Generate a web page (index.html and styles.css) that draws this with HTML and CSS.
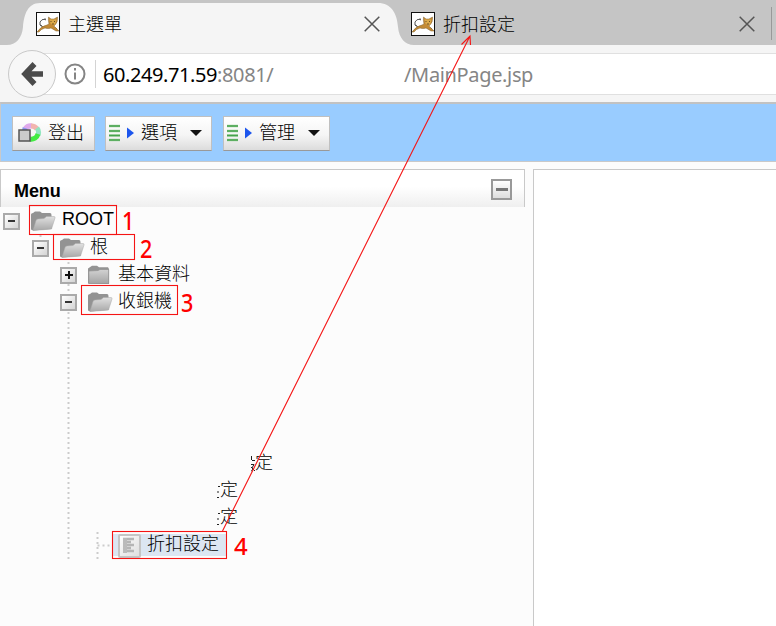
FILE: index.html
```html
<!DOCTYPE html>
<html lang="zh-Hant">
<head>
<meta charset="utf-8">
<title>主選單</title>
<link rel="stylesheet" href="styles.css">
</head>
<body>
<svg class="defs" width="0" height="0" aria-hidden="true">
  <defs>
    <linearGradient id="fold" x1="0" y1="0" x2="0" y2="1"><stop offset="0" stop-color="#d2d2d2"/><stop offset="1" stop-color="#a4a4a4"/></linearGradient>
    <linearGradient id="flap" x1="0" y1="0" x2="0" y2="1"><stop offset="0" stop-color="#e0e0e0"/><stop offset="1" stop-color="#a8a8a8"/></linearGradient>
    <linearGradient id="page-rim" x1="0" y1="0" x2="1" y2="1"><stop stop-color="#fff"/><stop offset="1" stop-color="#ddd"/></linearGradient>
    <symbol id="cat" viewBox="0 0 24 24">
      <rect x=".5" y=".5" width="23" height="23" fill="#fff" stroke="#111"/>
      <path d="M10 7Q5 7 4 10Q3 14 6 14M8 7l2 1M4 13l3 2M19 16l2 1" fill="none" stroke="#555" stroke-width="1"/>
      <path d="M1 20Q5 14 11 13L13 12Q12 8 12.500 5L15 7H18L21.500 5Q22 10 19 13Q17 14 19 15L23 19H20L15 16Q12 17 9 16Q5 17 3 20Z" fill="#c38a35" stroke="#806331" stroke-width=".5"/>
      <path d="M13.500 7.500h7l-1 4-2 2-3-2z" fill="#dba94a"/><path d="M14.500 9.500h1M18 9.500h1M16 12h2" stroke="#6d5023"/>
    </symbol>
    <symbol id="open" viewBox="0 0 25 20">
      <path d="M0 18.500V3.500Q0 2 2 2L4 .5H9L11 2H19Q20.500 2 20.500 4V18L2 19.500Z" fill="#939393"/>
      <path d="M2 19.500L5 9.500Q5.500 8 7 8L13 7.500L15.500 5.500H23Q24.500 5.500 24 7L20.500 18Z" fill="url(#flap)" stroke="#aaa" stroke-width=".5"/>
    </symbol>
    <symbol id="closed" viewBox="0 0 25 20">
      <path d="M0 18.500V3.500L4 .8H9L11 2.200H20L21 4V19Z" fill="#949494"/>
      <path d="M.8 18.500V6L10 5.500L12 4.500H20.700V18.500Z" fill="url(#fold)" stroke="#919191" stroke-width=".7"/>
    </symbol>
    <symbol id="menu" viewBox="0 0 26 18">
      <path d="M0 2h11M0 7h11M0 11.500h11M0 16h11" stroke="#a5d5a5" stroke-width="2.400"/>
      <path d="M0 2h11M0 7h11M0 11.500h11M0 16h11" stroke="#46a24c" stroke-width="1.300"/>
      <path d="M18 3.500L25 9L18 14.500Z" fill="#1d56ed"/>
    </symbol>
  </defs>
</svg>

<div class="window">
  <header class="tabs">
    <svg class="tab-shape" width="420" height="45" viewBox="0 0 420 45"><path d="M0 45H7C16 45 22 38 23 27C24 14 28 3 40 3H378C391 3 397 13 398 27C399 38 405 45 414 45Z" fill="#f5f5f5"/></svg>
    <div class="tab first"><svg class="cat"><use href="#cat"/></svg><span>主選單</span><svg class="close" viewBox="0 0 16 16"><path d="M.7.7L15.300 15.300M15.300.7L.7 15.300"/></svg></div>
    <div class="tab second"><svg class="cat"><use href="#cat"/></svg><span>折扣設定</span><svg class="close" viewBox="0 0 16 16"><path d="M.7.7L15.300 15.300M15.300.7L.7 15.300"/></svg></div>
    <i class="divider"></i>
  </header>

  <nav class="address">
    <div class="field">
      <svg class="info" viewBox="0 0 22 22"><circle cx="11" cy="11" r="9.500"/><path d="M11 9.500V16.500M11 5V7.500"/></svg>
      <i class="sep"></i>
      <span class="host">60.249.71.59</span><span class="port">:8081/</span><span class="path">/MainPage.jsp</span>
    </div>
    <div class="back"><svg width="22" height="24" viewBox="0 0 22 24"><path d="M13.500 2L4 12L13.500 22M4 12H22" fill="none" stroke="#4b4b4b" stroke-width="5.500"/></svg></div>
  </nav>

  <div class="toolbar">
    <button class="logout"><svg width="24" height="20" viewBox="0 0 24 20"><g fill="none" stroke-width="5"><path d="M7 6A7 7 0 0 1 14 3" stroke="#dfa9ec"/><path d="M13 3A7 7 0 0 1 19 6" stroke="#f2b4ae"/><path d="M19 5A7 7 0 0 1 20 12" stroke="#91e5c0"/><path d="M20 11A7 7 0 0 1 12 16" stroke="#42ec43"/><path d="M7 5A7 7 0 0 0 7 9" stroke="#8995ef"/></g><rect x="1" y="7" width="11" height="11" fill="#ccc" stroke="#555" stroke-width="1.500"/></svg><span>登出</span></button>
    <button class="drop"><svg class="menu"><use href="#menu"/></svg><span>選項</span><i></i></button>
    <button class="drop"><svg class="menu"><use href="#menu"/></svg><span>管理</span><i></i></button>
  </div>

  <main class="content">
    <section class="sidebar">
      <div class="head"><h1>Menu</h1><span class="collapse"></span></div>
      <div class="tree">
        <div class="row root"><i class="toggle"></i><svg class="folder"><use href="#open"/></svg><span>ROOT</span></div>
        <div class="row level1"><i class="toggle"></i><svg class="folder"><use href="#open"/></svg><span>根</span></div>
        <div class="row level2"><i class="toggle plus"></i><svg class="folder"><use href="#closed"/></svg><span>基本資料</span></div>
        <div class="row level2"><i class="toggle"></i><svg class="folder"><use href="#open"/></svg><span>收銀機</span></div>
        <div class="gap"></div>
        <div class="row cut one"><svg width="4" height="18" viewBox="0 0 4 18"><path d="M.5 1V5M1 5.500H4M0 9.500H3L1 13M0 12L4 16M2 14L0 16.500"/></svg><span>定</span></div>
        <div class="row cut two"><svg width="3" height="18" viewBox="0 0 3 18"><path d="M1 4.500H3M1 9V11M0 15.500H2"/></svg><span>定</span></div>
        <div class="row cut two"><svg width="3" height="18" viewBox="0 0 3 18"><path d="M1 4.500H3M1 9V11M0 15.500H2"/></svg><span>定</span></div>
        <div class="row leaf"><div class="selected"><svg width="23" height="24" viewBox="0 0 23 24"><rect x="1" y="1" width="21" height="22" rx="1" fill="url(#page-rim)" stroke="#c5c5c5" stroke-width="2"/><path d="M5 5h11M5 8h8M5 11h11M5 14h8M5 17h11" stroke="#b5b5b5" stroke-width="2.500"/><path d="M7 4v15" stroke="#bbb" stroke-width="4"/></svg><span>折扣設定</span></div></div>
      </div>
    </section>
    <section class="page"></section>
  </main>

  <svg class="notes" width="776" height="626" viewBox="0 0 776 626">
    <g class="dots"><path d="M68.500 262V267M68.500 284V293M68.500 312V560M97.500 532V560M97.500 545.500H112M40.500 235V240"/></g>
    <g class="marks"><rect x="29.500" y="205.500" width="87" height="29"/><rect x="53.500" y="234.500" width="81" height="25"/><rect x="81.500" y="285.500" width="96" height="29"/><rect x="112.500" y="531.500" width="114" height="27"/><path d="M222.500 531L470 36M461.500 44.500L470 36L470.500 45"/></g>
    <g class="numbers"><text transform="translate(122 230) scale(.9 1.06)">1</text><text transform="translate(140 258) scale(.9 1.06)">2</text><text transform="translate(181 312) scale(.9 1.06)">3</text><text x="234" y="555">4</text></g>
  </svg>
</div>
</body>
</html>
```

FILE: styles.css
```css
* { box-sizing: border-box; }
body { margin: 0; overflow: hidden; background: #fcfcfc; color: #000; font: 18px/27px "Liberation Sans", "Noto Sans CJK TC", sans-serif; }
svg { display: block; flex: none; }
span { white-space: nowrap; }
.defs { position: absolute; }
.window { position: relative; width: 776px; height: 626px; display: flex; flex-direction: column; }

.tabs { position: relative; height: 45px; flex: none; display: flex; background: #c5c5c5; font-weight: 300; }
.tab-shape { position: absolute; left: 0; top: 0; }
.tab { position: relative; display: flex; align-items: center; height: 47px; }
.tab span { padding-top: 4px; }
.first { width: 380px; margin-left: 36px; margin-right: -5px; }
.second { width: 344px; }
.cat { width: 24px; height: 24px; margin-right: 8px; }
.close { width: 16px; height: 16px; margin-left: auto; stroke: #555; stroke-width: 1.5; }
.first .close { margin-right: 36px; }
.divider { width: 1px; height: 33px; margin: 7px 0 0 16px; background: #999; }

.address { position: relative; height: 57px; flex: none; padding-top: 8px; background: #f5f5f5; }
.field { display: flex; align-items: center; height: 42px; margin-left: 33px; padding-left: 31px; background: #fff; border: solid #e0e0e0; border-width: 1px 0; font: 20px/38px "Noto Sans", sans-serif; color: #858585; }
.field span { padding-top: 2px; }
.info { width: 22px; height: 22px; fill: none; stroke: #858585; stroke-width: 2; }
.sep { width: 1px; height: 28px; margin: 0 7px 0 9px; background: #d4d4d4; }
.host { width: 114px; color: #000; letter-spacing: -.42px; }
.port { width: 187px; letter-spacing: -.35px; }
.path { letter-spacing: -.35px; }
.back { position: absolute; left: 8px; top: 5px; width: 48px; height: 48px; border: 1px solid #c9c9c9; border-radius: 50%; background: #f7f7f7; display: grid; place-items: center; }

.toolbar { display: flex; gap: 10px; height: 60px; flex: none; padding: 12px 11px; background: #9cf; border: 1px solid #c9c9c9; border-top: 2px solid #c2c2c2; border-right: 0; }
button { height: 35px; padding: 0 9px 1px 5px; display: flex; align-items: center; border: 1px solid #c0c0c0; border-bottom-color: #999; background: linear-gradient(#fff, #f5f5f5 55%, #dcdcdc); color: #000; font: inherit; font-weight: 300; }
.logout { width: 83px; gap: 6px; }
.drop { width: 107px; padding-left: 3px; }
.drop + .drop { margin-left: 1px; }
.menu { width: 26px; height: 18px; margin-right: 6px; }
.drop i { margin-left: auto; border: solid transparent; border-width: 6px 6px 0; border-top-color: #111; }

.content { display: flex; flex: 1; margin-top: 7px; }
.sidebar { width: 525px; }
.head { display: flex; align-items: center; justify-content: space-between; height: 38px; padding: 2px 12px 0 13px; border: 1px solid #c9c9c9; border-bottom: 0; background: linear-gradient(#fff 45%, #efefef); }
h1 { margin: 3px 0 0; font: bold 18px/22px "Liberation Sans", sans-serif; letter-spacing: -.1px; }
.collapse { width: 21px; height: 21px; border: 2px solid #999; background: linear-gradient(#777, #777) center / 12px 3px no-repeat, linear-gradient(#fff, #ddd); }
.page { flex: 1; margin-left: 8px; border: solid #c9c9c9; border-width: 1px 0 0 1px; background: #fff; }

.tree { height: 419px; font-weight: 300; }
.row { display: flex; align-items: center; height: 27px; }
.root { padding-left: 3px; }
.root span { padding-bottom: 2px; font-weight: 400; }
.level1 { padding-left: 32px; }
.level2 { padding-left: 60px; }
.toggle { width: 17px; height: 17px; margin: 1px 11px 0 0; border: 2px solid #aaa; background: linear-gradient(#333, #333) center / 7px 2px no-repeat, linear-gradient(135deg, #fff, #d4d4d4); }
.plus { background: linear-gradient(#111, #111) center / 8px 2px no-repeat, linear-gradient(#111, #111) center / 2px 8px no-repeat, linear-gradient(135deg, #fff, #d4d4d4); }
.folder { width: 25px; height: 20px; margin-right: 5px; }
.root .folder { margin-right: 6px; }
.gap { height: 135px; }
.cut svg { fill: none; stroke: #222; stroke-width: 1; }
.one { padding-left: 251px; }
.two { padding-left: 217px; }
.leaf { padding-left: 113px; }
.selected { width: 113px; height: 22px; display: flex; align-items: center; gap: 6px; padding-left: 5px; background: #dce6f2; }
.selected svg { margin-top: 3px; }
.selected span { padding-bottom: 1px; }

.notes { position: absolute; inset: 0; pointer-events: none; }
.dots { fill: none; stroke: #ccc; stroke-width: 2; stroke-dasharray: 2 3; }
.marks { fill: none; stroke: #f51414; stroke-width: 1.1; }
.numbers { fill: #f00; font: 500 24px "Noto Sans", sans-serif; }
```
